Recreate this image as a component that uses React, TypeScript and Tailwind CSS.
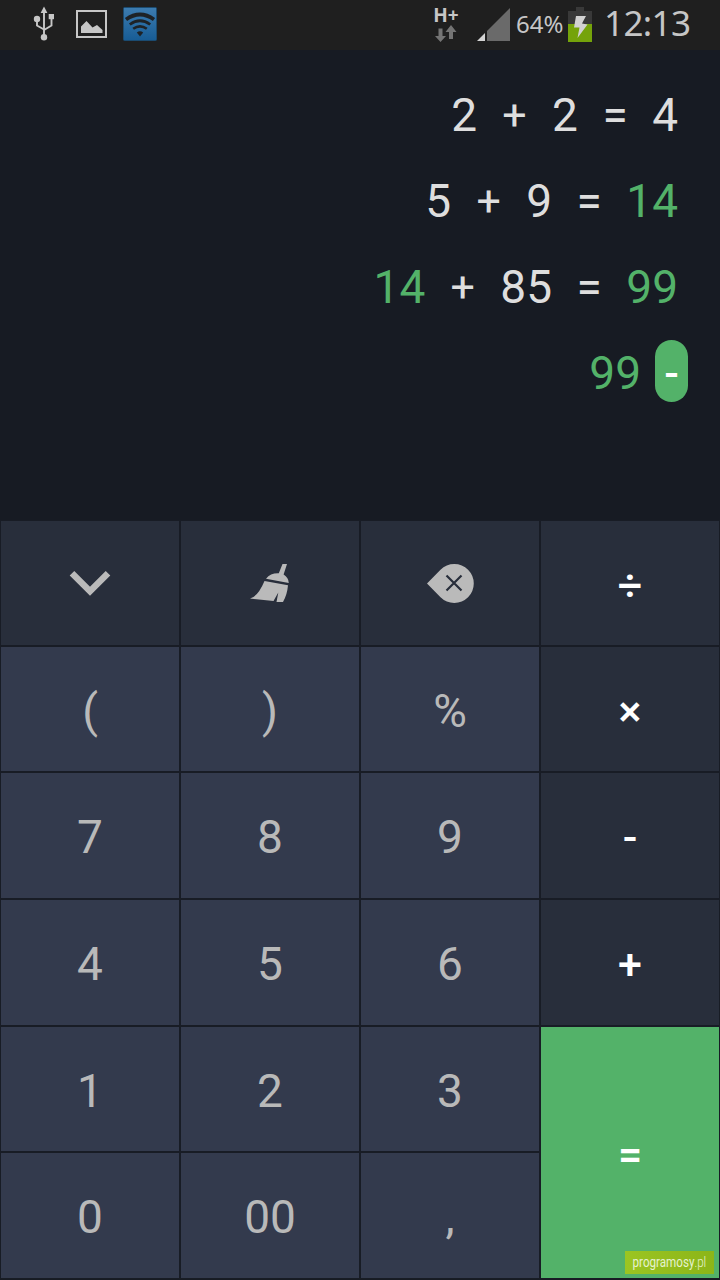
import type { ReactNode } from 'react';
import clsx from 'clsx';

type Token = { text: string; result?: boolean };

const HISTORY: Token[][] = [
  [{ text: '2' }, { text: '+' }, { text: '2' }, { text: '=' }, { text: '4' }],
  [{ text: '5' }, { text: '+' }, { text: '9' }, { text: '=' }, { text: '14', result: true }],
  [{ text: '14', result: true }, { text: '+' }, { text: '85' }, { text: '=' }, { text: '99', result: true }],
];

function UsbIcon() {
  return (
    <svg width="22" height="36" viewBox="0 0 22 36" fill="none" stroke="#c6c6c6" strokeWidth="1.9">
      <path d="M11 5v26M4 13v6.5l7 4M18.5 11v8.5L11 24" />
      <path d="M11 .5l3.4 6.4H7.600z" fill="#c6c6c6" stroke="none" />
      <circle cx="4" cy="13" r="3.2" fill="#c6c6c6" stroke="none" />
      <path d="M15.700 8H21v5.200h-5.300z" fill="#c6c6c6" stroke="none" />
      <circle cx="11" cy="31.300" r="3.200" fill="#c6c6c6" stroke="none" />
    </svg>
  );
}

function PictureIcon() {
  return (
    <svg width="31" height="28" viewBox="0 0 31 28">
      <rect x="1" y="1" width="29" height="26" fill="none" stroke="#c6c6c6" strokeWidth="2" />
      <path d="M5 23v-6.500l5.500-5.500 6 6.500 4.500-2.500 5.500 5v3z" fill="#c6c6c6" />
    </svg>
  );
}

function WifiIcon() {
  return (
    <svg width="34" height="34" viewBox="0 0 34 34">
      <defs>
        <linearGradient id="wifi" x1="0" y1="0" x2="0" y2="1">
          <stop offset="0" stopColor="#3d7cb0" />
          <stop offset="1" stopColor="#175c95" />
        </linearGradient>
      </defs>
      <rect x="0.500" y="0.500" width="33" height="33" rx="1" fill="url(#wifi)" stroke="#1b4b70" />
      <g fill="none" stroke="#1e2226">
        <path d="M3 12.500q14-10 28 0" strokeWidth="3.800" />
        <path d="M6.800 17.500q10.200-7.600 20.400 0" strokeWidth="2.800" />
        <path d="M10.200 21.800q6.800-5 13.600 0" strokeWidth="2.600" />
      </g>
      <path d="M13.800 25.500q3.200-2.400 6.400 0L17 29.500z" fill="#1e2226" />
    </svg>
  );
}

function StatusBar() {
  return (
    <header className="flex h-[50px] shrink-0 items-center bg-[#1f1f1f] pb-[2px] pl-[33px] font-['Noto_Sans',sans-serif] text-[#c6c6c6]">
      <UsbIcon />
      <div className="ml-[21px]"><PictureIcon /></div>
      <div className="ml-4"><WifiIcon /></div>

      <div className="ml-auto flex w-[24px] flex-col items-center">
        <span className="text-[19px] leading-[19px] font-bold">H+</span>
        <svg width="22" height="17" viewBox="0 0 22 17" fill="#747474">
          <path d="M3.500 3.500h4v7.500H11l-5.500 6-5.500-6h3.500z" />
          <path d="M14 14h4V7h3.500L16 0l-5.500 7H14z" />
        </svg>
      </div>
      <svg className="ml-[19px]" width="33" height="34" viewBox="0 0 33 34">
        <path d="M10 34V24L33 1v33z" fill="#6a6a6a" />
        <path d="M0 34l8-8v8z" fill="#d4d4d4" />
      </svg>
      <span className="ml-[6px] w-[47px] text-[24px] leading-none">64%</span>
      <svg className="ml-[5px]" width="24" height="35" viewBox="0 0 24 35">
        <path d="M8 0h8v4h8v14H0V4h8z" fill="#393939" />
        <path d="M0 17h24v18H0z" fill="#75a30a" />
        <path d="M8 9h10l-4 7.500 5.500 1L9.500 31l2-10.500H6z" fill="#d2d2d2" />
      </svg>
      <span className="mb-[4px] ml-3 w-[116px] text-[35px] leading-none tracking-[-0.600px]">12:13</span>
    </header>
  );
}

function History() {
  return (
    <section className="flex h-[470px] shrink-0 flex-col items-end pt-[22px] pr-[42px] text-[#dedede]">
      {HISTORY.map((line, i) => (
        <div key={i} className="flex h-[86px] items-center gap-[24.5px]">
          {line.map((token, j) => (
            <span
              key={j}
              className={clsx(token.result && 'text-[#53b269]', token.text === '+' && 'w-[26px] text-center text-[43px]')}
            >
              {token.text}
            </span>
          ))}
        </div>
      ))}
      <div className="-mr-[10px] flex h-[86px] items-center gap-[14px]">
        <span className="text-[#53b269]">99</span>
        <span className="mb-1 flex h-[62px] w-[33px] items-center justify-center rounded-full bg-[#53b269] pt-[4px] text-[43px] font-medium text-white">-</span>
      </div>
    </section>
  );
}

function Key({ children, kind = 'digit', className }: { children: ReactNode; kind?: 'digit' | 'action' | 'operator' | 'equals'; className?: string }) {
  return (
    <button
      className={clsx(
        'flex items-center justify-center border border-[#181c25]',
        kind === 'digit' && 'bg-[#333a4d] pt-[3px] text-[#b9b9b9]',
        kind === 'action' && 'bg-[#282e3b] text-[#bababa]',
        kind === 'operator' && 'bg-[#282e3b] pt-[4px] text-[43px] font-medium text-white',
        kind === 'equals' && 'relative bg-[#53b269] pt-[3px] text-[43px] font-medium text-white',
        className,
      )}
    >
      {children}
    </button>
  );
}

function Keypad() {
  return (
    <main className="grid grid-cols-4 grid-rows-[126px_126px_127px_127px_126px_127px]">
      <Key kind="action">
        <svg width="42" height="26" viewBox="0 0 42 26" fill="none" stroke="currentColor" strokeWidth="6.500">
          <path d="M3 3.200l18 18 18-18" />
        </svg>
      </Key>
      <Key kind="action">
        <svg className="mr-px" width="40" height="38" viewBox="0 0 40 38" fill="currentColor">
          <path d="M32.500 0H37l-3.400 10.500q5 3 5.200 8.500L16 14.700q4.500-5.700 12.800-5.400z" />
          <path d="M14.500 17L38 21.300q-.8 9.500-5 16.700h-6.500l1.800-9.500-4.800 8.500L0 34.500Q8 32.500 14.500 17z" />
        </svg>
      </Key>
      <Key kind="action">
        <svg width="47" height="39" viewBox="0 0 47 39">
          <path d="M0 19.500L13.500 5.700A19.500 19.500 0 1 1 13.500 33.300z" fill="currentColor" />
          <path d="M19.500 11.500l15 15M34.500 11.500l-15 15" stroke="#282e3b" strokeWidth="2.200" />
        </svg>
      </Key>
      <Key kind="operator">÷</Key>

      <Key>(</Key>
      <Key>)</Key>
      <Key>%</Key>
      <Key kind="operator">×</Key>

      <Key>7</Key>
      <Key>8</Key>
      <Key>9</Key>
      <Key kind="operator">-</Key>

      <Key>4</Key>
      <Key>5</Key>
      <Key>6</Key>
      <Key kind="operator">+</Key>

      <Key>1</Key>
      <Key>2</Key>
      <Key>3</Key>
      <Key kind="equals" className="row-span-2">
        =
        <span className="absolute right-[5px] bottom-1 flex h-[23px] w-[89px] items-center justify-center bg-linear-to-r from-[#9bc522] to-[#8cb518] pb-px text-[14px] leading-none font-normal text-[#e6f2cf]">
          <span className="scale-x-[.83] whitespace-nowrap">programosy<span className="font-light">.pl</span></span>
        </span>
      </Key>

      <Key>0</Key>
      <Key>00</Key>
      <Key>,</Key>
    </main>
  );
}

export default function App() {
  return (
    <div className="flex h-[1280px] w-[720px] flex-col overflow-hidden bg-[#171b23] font-['Roboto',sans-serif] text-[46px] leading-none">
      <StatusBar />
      <History />
      <Keypad />
    </div>
  );
}
